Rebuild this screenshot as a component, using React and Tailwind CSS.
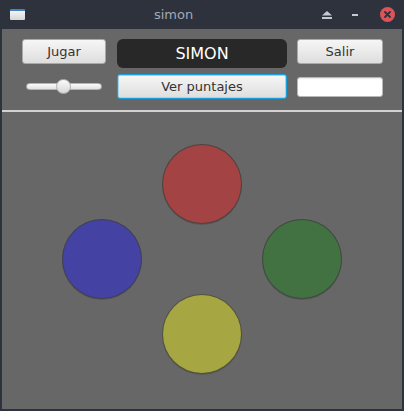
import React from 'react';

const font = { fontFamily: '"DejaVu Sans", "Noto Sans", sans-serif' };

const TitleBar = () => (
  <div className="flex h-[29px] items-center bg-[#2d323d] pl-[10px] pr-[9px]">
    <div className="h-[11px] w-[15px] rounded-[1px] bg-gradient-to-b from-[#f4f4f4] to-[#d6d6d6] border-t-[2px] border-[#4a7fc4]" />
    <div className="flex-1 text-center text-[13px] text-[#a3aab6]">simon</div>
    <div className="flex items-center">
      <svg width="10" height="8" viewBox="0 0 10 8" className="mr-[20px]">
        <path d="M5 0 L10 4.5 H0 Z" fill="#c4c9d2" />
        <rect x="0" y="6" width="10" height="2" fill="#c4c9d2" />
      </svg>
      <div className="mr-[22px] h-[2px] w-[6px] bg-[#c4c9d2]" />
      <div className="flex h-[15px] w-[15px] items-center justify-center rounded-full bg-[#dc5458]">
        <svg width="7" height="7" viewBox="0 0 7 7">
          <path d="M1 1 L6 6 M6 1 L1 6" stroke="#2d323d" strokeWidth="1.8" strokeLinecap="round" />
        </svg>
      </div>
    </div>
  </div>
);

const FxButton = ({ children, focused }) => (
  <button
    className={
      'flex h-[25px] w-full items-center justify-center rounded-[3px] bg-gradient-to-b from-[#f6f6f6] to-[#dedede] text-[13px] text-[#333] ' +
      (focused ? 'border border-[#1b9fdc] shadow-[inset_0_0_0_1px_#9fd4ee]' : 'border border-[#a9a9a9]')
    }
  >
    {children}
  </button>
);

const Circle = ({ color, className }) => (
  <div
    className={'h-[80px] w-[80px] rounded-full border border-[#3f3f3f]/80 shadow-[0_1px_0_rgba(0,0,0,0.15)] ' + className}
    style={{ backgroundColor: color }}
  />
);

export default function App() {
  return (
    <div className="h-[411px] w-[404px] bg-[#2d323d]" style={font}>
      <TitleBar />
      <div className="mx-[2px] flex h-[380px] flex-col bg-[#676767]">
        <div className="grid grid-cols-[84px_170px_85px] grid-rows-[29px_25px] gap-x-[11px] gap-y-[6px] pl-[20px] pt-[10px]">
          <FxButton>Jugar</FxButton>
          <div className="flex items-center justify-center rounded-[6px] bg-[#282828] text-[16px] text-white">SIMON</div>
          <div className="ml-[-1px]">
            <FxButton>Salir</FxButton>
          </div>

          <div className="relative flex items-center px-[4px]">
            <div className="h-[7px] w-full rounded-full border border-[#b5b5b5] bg-gradient-to-b from-[#fbfbfb] to-[#e2e2e2]" />
            <div className="absolute left-[34px] top-[5px] h-[15px] w-[15px] rounded-full border border-[#b0b0b0] bg-gradient-to-b from-[#fafafa] to-[#d8d8d8]" />
          </div>
          <FxButton focused>Ver puntajes</FxButton>
          <div className="ml-[-1px] flex items-center">
            <div className="h-[20px] w-full rounded-[3px] border border-[#b8b8b8] bg-white shadow-[inset_0_1px_1px_rgba(0,0,0,0.08)]" />
          </div>
        </div>

        <div className="mt-[11px] h-[2px] bg-[#d2d2d2]" />

        <div className="flex justify-center pt-[32px]">
          <div className="grid grid-cols-[80px_80px_80px] grid-rows-[75px_75px_80px] gap-x-[20px]">
            <div />
            <Circle color="#a34343" />
            <div />
            <Circle color="#4443a4" />
            <div />
            <Circle color="#427242" />
            <div />
            <Circle color="#a6a643" />
            <div />
          </div>
        </div>
      </div>
    </div>
  );
}
